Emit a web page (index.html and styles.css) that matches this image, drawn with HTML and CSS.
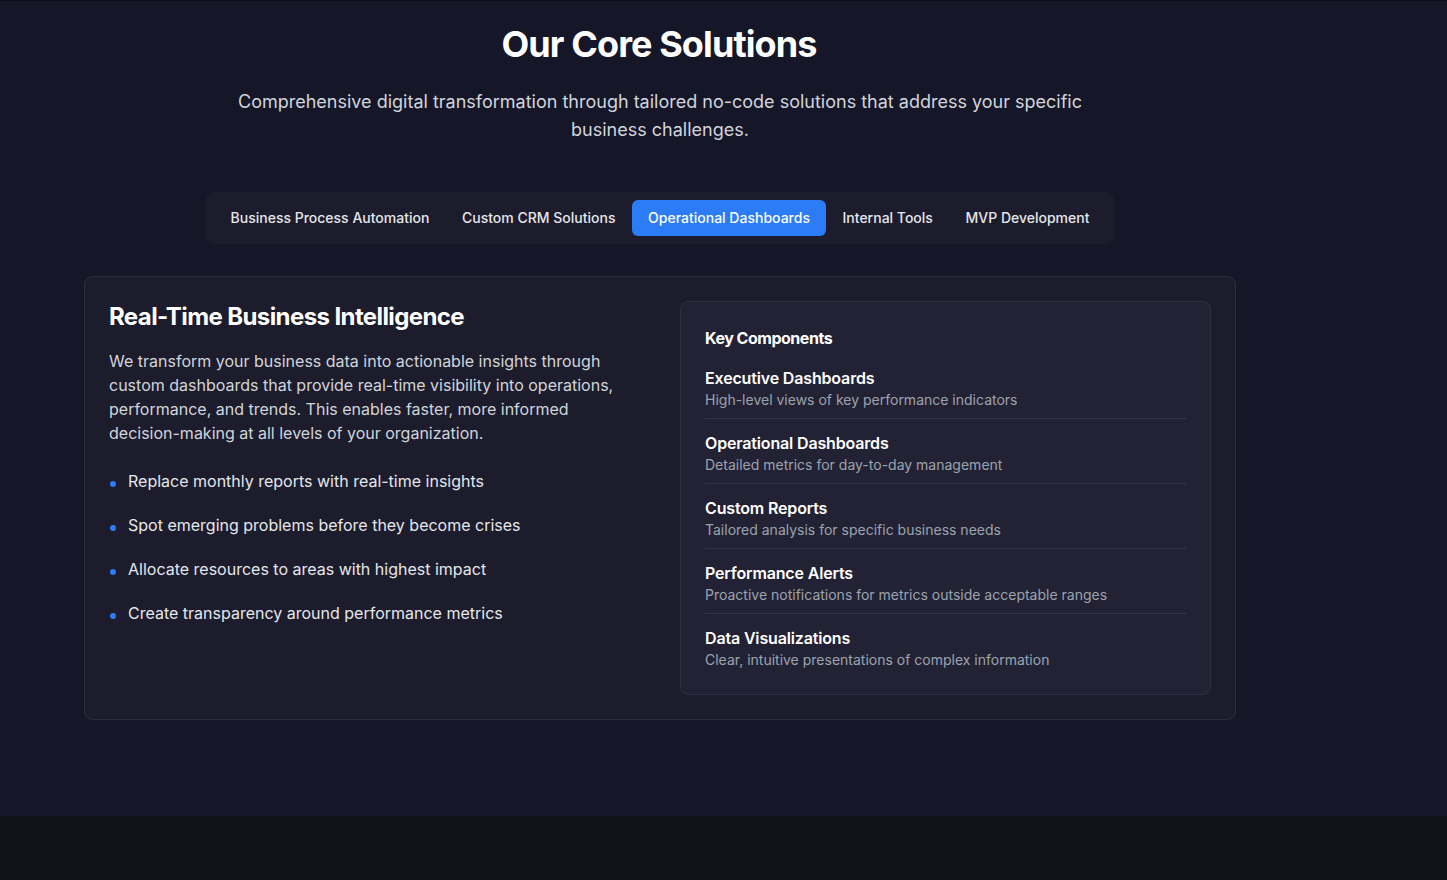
FILE: index.html
```html
<!DOCTYPE html>
<html lang="en">
<head>
<meta charset="utf-8">
<title>Our Core Solutions</title>
<link rel="stylesheet" href="styles.css">
</head>
<body>
<section class="solutions">
  <div class="wrap">
    <h1 class="title">Our Core Solutions</h1>
    <p class="subtitle">Comprehensive digital transformation through tailored no-code solutions that address your specific business challenges.</p>
    <div class="tabs-row">
      <div class="tabs">
        <button class="tab">Business Process Automation</button>
        <button class="tab">Custom CRM Solutions</button>
        <button class="tab active">Operational Dashboards</button>
        <button class="tab">Internal Tools</button>
        <button class="tab">MVP Development</button>
      </div>
    </div>
    <div class="card">
      <div class="col-left">
        <h2 class="card-title">Real-Time Business Intelligence</h2>
        <p class="card-text">We transform your business data into actionable insights through custom dashboards that provide real-time visibility into operations, performance, and trends. This enables faster, more informed decision-making at all levels of your organization.</p>
        <ul class="benefits">
          <li><span class="dot"></span><span>Replace monthly reports with real-time insights</span></li>
          <li><span class="dot"></span><span>Spot emerging problems before they become crises</span></li>
          <li><span class="dot"></span><span>Allocate resources to areas with highest impact</span></li>
          <li><span class="dot"></span><span>Create transparency around performance metrics</span></li>
        </ul>
      </div>
      <div class="panel">
        <h3 class="panel-title">Key Components</h3>
        <div class="components">
          <div class="comp">
            <div class="comp-name">Executive Dashboards</div>
            <div class="comp-desc">High-level views of key performance indicators</div>
          </div>
          <div class="comp">
            <div class="comp-name">Operational Dashboards</div>
            <div class="comp-desc">Detailed metrics for day-to-day management</div>
          </div>
          <div class="comp">
            <div class="comp-name">Custom Reports</div>
            <div class="comp-desc">Tailored analysis for specific business needs</div>
          </div>
          <div class="comp">
            <div class="comp-name">Performance Alerts</div>
            <div class="comp-desc">Proactive notifications for metrics outside acceptable ranges</div>
          </div>
          <div class="comp">
            <div class="comp-name">Data Visualizations</div>
            <div class="comp-desc">Clear, intuitive presentations of complex information</div>
          </div>
        </div>
      </div>
    </div>
  </div>
</section>
<footer class="footer"></footer>
</body>
</html>
```

FILE: styles.css
```css
* { box-sizing: border-box; }
html, body { margin: 0; padding: 0; }
body {
  font-family: Inter, "Noto Sans", "Liberation Sans", sans-serif;
  background: #111119;
  color: #fff;
}
.solutions {
  background: #151628;
  border-top: 1px solid #0c0c1a;
  padding: 23px 0 96px;
}
.wrap {
  width: 1320px;
  display: flex;
  flex-direction: column;
  align-items: center;
}
.title {
  margin: 0 2px 0 0;
  font-size: 36px;
  line-height: 40px;
  font-weight: 700;
  letter-spacing: -0.025em;
  color: #fff;
}
.subtitle {
  margin: 24px 0 0;
  max-width: 896px;
  text-align: center;
  font-size: 18px;
  line-height: 28px;
  color: #d1d5db;
}
.tabs-row {
  margin-top: 48px;
  display: flex;
  justify-content: center;
}
.tabs {
  display: flex;
  background: #1c1c2c;
  border-radius: 8px;
  padding: 8px;
}
.tab {
  font-family: inherit;
  border: 0;
  background: transparent;
  color: #e5e7eb;
  font-size: 14px;
  line-height: 20px;
  font-weight: 500;
  padding: 8px 16.3px;
  border-radius: 6px;
  cursor: pointer;
}
.tab.active {
  background: #2b7cf6;
  color: #fff;
}
.card {
  margin-top: 32px;
  width: 1152px;
  background: #1c1c2c;
  border: 1px solid #2a2a3c;
  border-radius: 8px;
  padding: 24px;
  display: grid;
  grid-template-columns: 1fr 1fr;
  column-gap: 40px;
  align-items: start;
}
.card-title {
  margin: 0;
  font-size: 24px;
  line-height: 32px;
  font-weight: 700;
  letter-spacing: -0.025em;
  color: #fff;
}
.card-text {
  margin: 16px 0 0;
  font-size: 16px;
  line-height: 24px;
  color: #d1d5db;
}
.benefits {
  list-style: none;
  margin: 24px 0 0;
  padding: 0;
  display: flex;
  flex-direction: column;
  gap: 20px;
}
.benefits li {
  display: flex;
  align-items: flex-start;
  gap: 12px;
  padding-left: 1px;
  font-size: 16px;
  line-height: 24px;
  color: #e5e7eb;
}
.dot {
  flex: none;
  width: 6px;
  height: 6px;
  margin-top: 12px;
  border-radius: 50%;
  background: #2b7cf6;
}
.panel {
  background: #222234;
  border: 1px solid #2e2e42;
  border-radius: 8px;
  padding: 24px;
}
.panel-title {
  margin: 0;
  font-size: 16px;
  line-height: 24px;
  font-weight: 700;
  letter-spacing: -0.03em;
  color: #fff;
}
.components {
  margin-top: 16px;
  display: flex;
  flex-direction: column;
}
.comp {
  padding: 12px 0 8px;
  border-bottom: 1px solid #33334a;
}
.comp:first-child { padding-top: 0; }
.comp:last-child { padding-bottom: 0; border-bottom: 0; }
.comp-name {
  font-size: 16px;
  line-height: 24px;
  font-weight: 600;
  letter-spacing: -0.01em;
  color: #fff;
}
.comp-desc {
  font-size: 14px;
  line-height: 20px;
  color: #9ca3af;
}
.footer {
  height: 64px;
  background: #111119;
}
```
